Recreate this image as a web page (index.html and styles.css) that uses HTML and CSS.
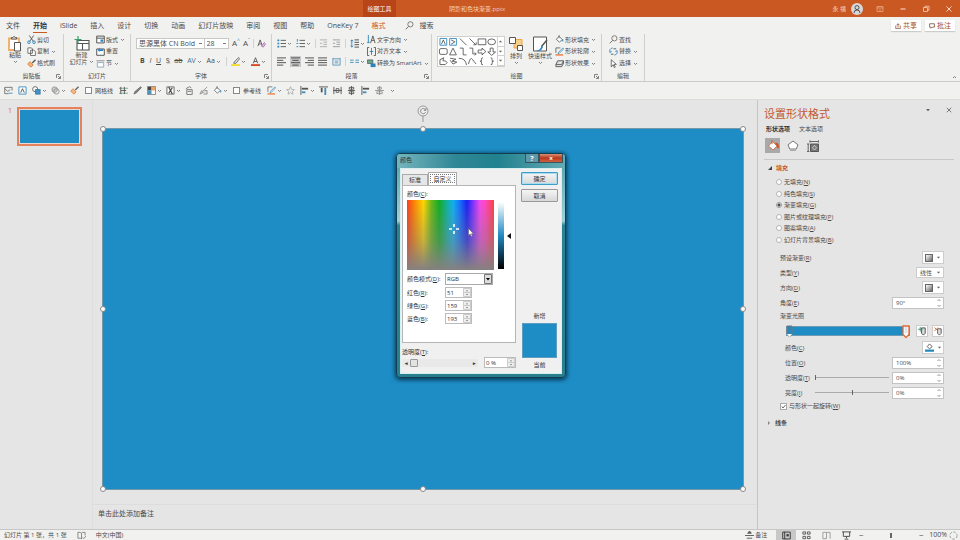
FILE: index.html
```html
<!DOCTYPE html>
<html lang="zh-CN">
<head>
<meta charset="utf-8">
<title>阴影和色块渐变.pptx</title>
<link rel="stylesheet" href="styles.css">
</head>
<body>
<svg class="sprite" aria-hidden="true">
  <symbol id="chev" viewBox="0 0 5 5"><path d="M1 2l1.500 1.500L4 2" fill="none" stroke="#666" stroke-width=".8"/></symbol>
  <symbol id="tri" viewBox="0 0 5 5"><path d="M.8 1.700h3.400L2.500 3.600z" fill="#666"/></symbol>
  <symbol id="launch" viewBox="0 0 5 5"><path d="M.5 4V.5H4M2 2l2.300 2.300M4.500 2v2.500H2" fill="none" stroke="#666" stroke-width=".8"/></symbol>
  <symbol id="bucket" viewBox="0 0 10 10"><path d="M4.500 1.500L8 5 5 8 1.500 4.800z" fill="#fff" stroke="#555" stroke-width=".9"/><path d="M4.500 0v3.500" stroke="#555" stroke-width=".8"/><path d="M8.300 4.500q1.400 2 .3 2.600-1.200-.4-.3-2.600" fill="#2a8bc4" stroke="#2a8bc4" stroke-width=".5"/></symbol>
  <symbol id="brush" viewBox="0 0 10 10"><path d="M9.500.8L5.800 4.500" stroke="#555" stroke-width="1.500"/><path d="M3.200 3l3.600 3.500L4.500 9 .8 5.800z" fill="#f4b27c" stroke="#d8742c" stroke-width=".9"/></symbol>
  <symbol id="outline" viewBox="0 0 10 10"><path d="M6 1H1v5.500" fill="none" stroke="#666"/><path d="M8.800 1L4 5.800l-.6 1.600 1.600-.5L9.600 2z" fill="#fff" stroke="#2a7db5" stroke-width=".8"/><path d="M.5 8.800h8.500" stroke="#ef7d3b" stroke-width="1.600"/></symbol>
  <symbol id="shapes" viewBox="0 0 10 10"><circle cx="3.500" cy="3.500" r="2.800" fill="#fff" stroke="#555"/><rect x="4" y="4" width="5" height="5" fill="#2d8ac6" stroke="#25709f"/></symbol>
  <symbol id="pen" viewBox="0 0 10 10"><path d="M8.500.8L9.400 1.700 4 7.500 1 9l1.300-3z" fill="#777" stroke="#444" stroke-width=".7"/></symbol>
  <symbol id="alignl" viewBox="0 0 10 10"><path d="M1 0v10" stroke="#444"/><path d="M2 3h7" stroke="#444" stroke-width="2"/><path d="M2 7h4" stroke="#2c83b5" stroke-width="2"/></symbol>
  <symbol id="search" viewBox="0 0 10 10"><circle cx="6" cy="3.700" r="2.900" fill="none" stroke="#666" stroke-width=".9"/><path d="M4 6L.8 9.300" stroke="#666"/></symbol>
</svg>

<div class="app">
<header class="titlebar">
  <span class="context-tab">绘图工具</span>
  <h1 class="doc-title">阴影和色块渐变.pptx</h1>
  <div class="window-tools">
    <span>永 福</span>
    <svg class="avatar" viewBox="0 0 12 12"><circle cx="6" cy="6" r="6" fill="#d7d7d7"/><circle cx="6" cy="4.600" r="2" fill="none" stroke="#444" stroke-width=".9"/><path d="M3 10q0-3 3-3t3 3" fill="none" stroke="#444" stroke-width=".9"/></svg>
    <svg class="win" viewBox="0 0 8 8"><path d="M1 1.500h6v5H1zM1 3h6M4 6V4" fill="none" stroke="#eda883" stroke-width=".8"/></svg>
    <svg class="win" viewBox="0 0 8 8"><path d="M1.500 4h5" stroke="#fbe2d6"/></svg>
    <svg class="win" viewBox="0 0 8 8"><path d="M1.500 2.500h4v4h-4zM3 2.500V1.200h4v4H5.500" fill="none" stroke="#fbcdb6" stroke-width=".8"/></svg>
    <svg class="win" viewBox="0 0 8 8"><path d="M1.500 1.500l5 5m0-5l-5 5" stroke="#fbe2d6" stroke-width=".9"/></svg>
  </div>
</header>

<nav class="tabs">
  <a href="#file">文件</a><a href="#home" class="current">开始</a><a href="#islide">iSlide</a><a href="#insert">插入</a><a href="#design">设计</a><a href="#trans">切换</a><a href="#anim">动画</a><a href="#show">幻灯片放映</a><a href="#review">审阅</a><a href="#view">视图</a><a href="#help">帮助</a><a href="#onekey">OneKey 7</a><a href="#format" class="format">格式</a>
  <button class="tell"><svg class="i8"><use href="#search"/></svg>搜索</button>
  <div class="share">
    <button><svg class="i6" viewBox="0 0 8 8"><path d="M1 3.500v4h6v-4M4 6V1M2 3l2-2 2 2" fill="none" stroke="#8d4a2e"/></svg>共享</button>
    <button><svg class="i6" viewBox="0 0 8 8"><path d="M.8 1h6.400v4.500H4L2.500 7V5.500H.8z" fill="none" stroke="#6d4a3e"/></svg>批注</button>
  </div>
</nav>

<section class="ribbon">
  <div class="group g-clip">
    <div class="body">
      <button class="big"><svg class="i16" viewBox="0 0 16 16"><path d="M2 2.500h10V14H2z" fill="#fff" stroke="#eeaa62" stroke-width="1.800"/><path d="M4.500 3V1.500h1.300q1.200-2 2.400 0h1.300V3z" fill="#fff" stroke="#555"/><path d="M7.500 6.500h6V15h-6z" fill="#fff" stroke="#555"/></svg><span>粘贴</span><svg class="chev"><use href="#chev"/></svg></button>
      <div class="stack">
        <button><svg class="i8" viewBox="0 0 10 10"><path d="M2.500.5L7 7M7.500.5L3 7" stroke="#444" stroke-width=".9"/><circle cx="2.200" cy="8" r="1.500" fill="none" stroke="#2a83c0"/><circle cx="7.800" cy="8" r="1.500" fill="none" stroke="#2a83c0"/></svg>剪切</button>
        <button><svg class="i8" viewBox="0 0 10 10"><path d="M1 1h4l1 1v5H1zM4 3.500h3.500L9.300 5v4.500H4z" fill="#fff" stroke="#555" stroke-width=".9"/></svg>复制<svg class="chev"><use href="#chev"/></svg></button>
        <button><svg class="i8"><use href="#brush"/></svg>格式刷</button>
      </div>
    </div>
    <div class="name">剪贴板<svg class="launch"><use href="#launch"/></svg></div>
  </div>

  <div class="group g-slides">
    <div class="body">
      <button class="big"><svg class="i16" viewBox="0 0 16 16"><path d="M3 4.500h12V14H3zM3 7.500h12M8.500 7.500V14" fill="#fff" stroke="#555" stroke-width="1.100"/><path d="M4 0v7M.5 3.500h7" stroke="#35a06a" stroke-width="1.200"/></svg><span>新建</span><span>幻灯片<svg class="chev"><use href="#chev"/></svg></span></button>
      <div class="stack">
        <button><svg class="i8" viewBox="0 0 10 10"><path d="M.8 1.200h8.400v7.600H.8zM1 3.500h8" fill="#fff" stroke="#444"/><path d="M5 5h3v2.500H5z" fill="#2a83c0"/></svg>版式<svg class="chev"><use href="#chev"/></svg></button>
        <button><svg class="i8" viewBox="0 0 10 10"><path d="M.8 2.200h8.400v7H.8z" fill="#fff" stroke="#444"/><path d="M2 3.500l2-3v2h4v2H4v1z" fill="#2a83c0"/></svg>重置</button>
        <button><svg class="i8" viewBox="0 0 10 10"><path d="M.5 2h9" stroke="#888"/><path d="M1.500 4h7v5h-7z" fill="#fff" stroke="#89a9bc"/></svg>节<svg class="chev"><use href="#chev"/></svg></button>
      </div>
    </div>
    <div class="name">幻灯片</div>
  </div>

  <div class="group g-font">
    <div class="body rows">
      <div class="row">
        <select class="family" aria-label="字体"><option>思源黑体 CN Bold</option></select><select class="size" aria-label="字号"><option>28</option></select>
        <button class="glyph">A<sup>^</sup></button><button class="glyph">A<sup>ˇ</sup></button><i class="sep"></i>
        <button><svg class="i8" viewBox="0 0 10 10"><path d="M1 8l2.500-7L6 8M2 5.500h3" fill="none" stroke="#555"/><path d="M5 8l3-4 1.500 1.500L7 9z" fill="#e6bfe8" stroke="#9a5c9e" stroke-width=".8"/></svg></button>
      </div>
      <div class="row style">
        <button><b>B</b></button><button><i>I</i></button><button><u>U</u></button><button class="shadow">S</button><button><s>ab</s></button>
        <button class="av">AV<svg class="chev"><use href="#chev"/></svg></button><button>Aa<svg class="chev"><use href="#chev"/></svg></button><i class="sep"></i>
        <button><svg class="i8" viewBox="0 0 10 10"><path d="M8.500.5L4 5 3 7h2.500L9.500 2z" fill="#ddd" stroke="#555" stroke-width=".8"/><path d="M0 9h10" stroke="#f6dc26" stroke-width="2"/></svg><svg class="chev"><use href="#chev"/></svg></button>
        <button><svg class="i8" viewBox="0 0 10 10"><path d="M2.500 7L5 .8 7.500 7M3.300 5h3.400" fill="none" stroke="#555"/><path d="M0 9h10" stroke="#d9431d" stroke-width="2"/></svg><svg class="chev"><use href="#chev"/></svg></button>
      </div>
    </div>
    <div class="name">字体<svg class="launch"><use href="#launch"/></svg></div>
  </div>

  <div class="group g-para">
    <div class="body">
      <div class="rows">
        <div class="row">
          <button><svg class="i8" viewBox="0 0 10 10"><path d="M4 1.500h6M4 5h6M4 8.500h6" stroke="#555"/><path d="M.5 1.500h2M.5 5h2M.5 8.500h2" stroke="#2a83c0" stroke-width="1.800"/></svg><svg class="chev"><use href="#chev"/></svg></button>
          <button><svg class="i8" viewBox="0 0 10 10"><path d="M4 1.500h6M4 5h6M4 8.500h6" stroke="#555"/><path d="M1.500 0v3M.5 5h2M.5 8.500h2" stroke="#2a83c0"/></svg><svg class="chev"><use href="#chev"/></svg></button><i class="sep"></i>
          <button><svg class="i8" viewBox="0 0 10 10"><path d="M1 1h8M5 3.500h4M5 6h4M1 8.500h8M3.500 4.800H1" stroke="#aaa"/></svg></button>
          <button><svg class="i8" viewBox="0 0 10 10"><path d="M1 1h8M5 3.500h4M5 6h4M1 8.500h8M3.500 4.800H1" stroke="#999"/></svg></button><i class="sep"></i>
          <button><svg class="i8" viewBox="0 0 10 10"><path d="M5 1h5M5 3.700h5M5 6.300h5M5 9h5" stroke="#444"/><path d="M2 1v8M.5 2.500L2 1l1.500 1.500M.5 7.500L2 9l1.500-1.500" fill="none" stroke="#2a83c0"/></svg><svg class="chev"><use href="#chev"/></svg></button>
        </div>
        <div class="row aligns">
          <button><svg class="i8" viewBox="0 0 10 10"><path d="M0 1h10M0 3.700h7M0 6.300h10M0 9h7" stroke="#444"/></svg></button>
          <button class="on"><svg class="i8" viewBox="0 0 10 10"><path d="M0 1h10M1.500 3.700h7M0 6.300h10M1.500 9h7" stroke="#444"/></svg></button>
          <button><svg class="i8" viewBox="0 0 10 10"><path d="M0 1h10M3 3.700h7M0 6.300h10M3 9h7" stroke="#444"/></svg></button>
          <button><svg class="i8" viewBox="0 0 10 10"><path d="M0 1h10M0 3.700h10M0 6.300h10M0 9h10" stroke="#444"/></svg></button>
          <button><svg class="i8" viewBox="0 0 10 10"><path d="M1 1v8M9 1v8M1 2h8M1 9h8M3 4.500h4M3 6.500h4" stroke="#5696b8"/></svg></button><i class="sep"></i>
          <button><svg class="i8" viewBox="0 0 10 10"><path d="M0 3.500h4M6 3.500h4M0 6h4M6 6h4" stroke="#3e8fc0"/></svg><svg class="chev"><use href="#chev"/></svg></button>
        </div>
      </div>
      <div class="stack">
        <button><svg class="i8" viewBox="0 0 10 10"><path d="M1.500 0v9M0 7.500L1.500 9 3 7.500" fill="none" stroke="#2a83c0"/><path d="M4 9l2.500-8L9 9M5 6h3" fill="none" stroke="#555"/></svg>文字方向<svg class="chev"><use href="#chev"/></svg></button>
        <button><svg class="i8" viewBox="0 0 10 10"><path d="M2.500.5H.5v9h2M7.500.5h2v9h-2" fill="none" stroke="#555"/><path d="M5 1v8M3 5h4" stroke="#2a83c0"/></svg>对齐文本<svg class="chev"><use href="#chev"/></svg></button>
        <button><svg class="i8" viewBox="0 0 10 10"><path d="M.5 1h6v4h-6z" fill="#62a98b" stroke="#555" stroke-width=".8"/><path d="M4 5h5.500v4H4z" fill="#2a83c0"/></svg>转换为 SmartArt<svg class="chev"><use href="#chev"/></svg></button>
      </div>
    </div>
    <div class="name">段落<svg class="launch"><use href="#launch"/></svg></div>
  </div>

  <div class="group g-draw">
    <div class="body">
      <div class="gallery">
        <svg class="shape-set" viewBox="0 0 60 30" fill="none" stroke="#555" stroke-width=".9">
          <g stroke="#2a83c0"><path d="M1.500 1.500h7v7h-7zM11.500 1.500h7v7h-7z"/></g><path d="M3 7.500L5 3l2 4.500M13 3l4 2-4 2.500"/><path d="M22 1.500l7 7M32 1.500l6.500 6.500m-2.500 0h3V5.500"/><path d="M41 2h8v6h-8z"/><ellipse cx="55" cy="5" rx="4" ry="3"/>
          <rect x="1" y="12" width="8" height="6" rx="1.500"/><path d="M15 11.500l3.500 7h-7zM22 11.500h3.500v7H29M32 11.500h3.500v6H39m-1.500-1.500L39 17.500 37.500 19M41 13.500h4v-2l4 3.500-4 3.500v-2h-4zM53.500 11.500h3v4H59l-4 3.500-4-3.500h2.500z"/>
          <path d="M1.500 23.500l4-2-1 3q4 0 4.500 2L7 28.500H1.500zM12 22l6 1-4 2 5 1-4 2-3-4M21 22q7 0 8 7M31 28q2-8 4-5t4 5M46 21.500q-2 0-1.500 2t-1.500 1.500q2 0 1.500 2t1.500 1.500M54 21.500q2 0 1.500 2t1.500 1.500q-2 0-1.500 2T54 28.500"/>
        </svg>
        <div class="scroll"><button aria-label="上"><svg class="chev flip"><use href="#tri"/></svg></button><button aria-label="下"><svg class="chev"><use href="#tri"/></svg></button><button aria-label="更多"><svg class="chev"><use href="#tri"/></svg></button></div>
      </div>
      <button class="big arrange"><svg class="i16" viewBox="0 0 16 16"><path d="M6 3.500h8V12H6z" fill="#f7cf88" stroke="#e9a94c"/><path d="M1.500 1.500h6v6h-6zM9.500 9.500h5v5h-5z" fill="#fff" stroke="#555"/></svg><span>排列</span><svg class="chev"><use href="#chev"/></svg></button>
      <button class="big quick"><svg class="i16" viewBox="0 0 16 16"><path d="M1.500 1h13v14h-13z" fill="#fff" stroke="#555"/><path d="M15 4l-5.500 6.500" stroke="#555" stroke-width="1.500"/><path d="M9.500 9.500q-1 5-5.500 5 5 2 7-3.500z" fill="#2a83c0"/></svg><span>快速样式</span><svg class="chev"><use href="#chev"/></svg></button>
      <div class="stack">
        <button><svg class="i8"><use href="#bucket"/></svg>形状填充<svg class="chev"><use href="#chev"/></svg></button>
        <button><svg class="i8"><use href="#outline"/></svg>形状轮廓<svg class="chev"><use href="#chev"/></svg></button>
        <button><svg class="i8" viewBox="0 0 10 10"><path d="M3 2h6.500L7.500 6H1zM1 6v2.500h6.500l2-4V2" fill="#ddd" stroke="#555"/></svg>形状效果<svg class="chev"><use href="#chev"/></svg></button>
      </div>
    </div>
    <div class="name">绘图<svg class="launch"><use href="#launch"/></svg></div>
  </div>

  <div class="group g-edit">
    <div class="body"><div class="stack">
      <button><svg class="i8"><use href="#search"/></svg>查找</button>
      <button><svg class="i8" viewBox="0 0 10 10"><path d="M4 1q-4 1-3 5l2-1M6 9q4-1 3-5L7 5" fill="none" stroke="#2a83c0"/><path d="M5 2h3M2 8h3" stroke="#555"/></svg>替换<svg class="chev"><use href="#chev"/></svg></button>
      <button><svg class="i8" viewBox="0 0 10 10"><path d="M2.500.8v8l2-2.300L6 9.500l1-.5-1.500-3h2.700z" fill="#fff" stroke="#555" stroke-width=".9"/></svg>选择<svg class="chev"><use href="#chev"/></svg></button>
    </div></div>
    <div class="name">编辑</div>
  </div>
  <button class="collapse" aria-label="折叠功能区"><svg class="chev flip"><use href="#chev"/></svg></button>
</section>

<div class="quickbar">
  <svg class="i8" viewBox="0 0 10 10"><path d="M9 5V1.500H.8v7H5M1 3l3 3 3-2" fill="none" stroke="#555" stroke-width=".9"/><path d="M5 8h4.500" stroke="#2a83c0"/></svg>
  <svg class="i8" viewBox="0 0 10 10"><path d="M1 1h8v8H1z" fill="#fff" stroke="#2a83c0"/><path d="M3 7.500L5 3l2 4.500" fill="none" stroke="#444"/></svg>
  <span class="drop"><svg class="i8"><use href="#shapes"/></svg><svg class="chev"><use href="#chev"/></svg></span>
  <span class="drop"><svg class="i8" viewBox="0 0 10 10"><circle cx="4" cy="4" r="3" fill="#ccc" stroke="#888"/><circle cx="6" cy="6" r="3" fill="none" stroke="#888"/></svg><svg class="chev"><use href="#chev"/></svg></span>
  <svg class="i8"><use href="#brush"/></svg>
  <label><input type="checkbox">网格线</label>
  <svg class="i8" viewBox="0 0 10 10"><path d="M0 2.500h10M0 8h10" stroke="#5da183"/><path d="M2 1v8M6 1v8M2 5h6" stroke="#444"/></svg>
  <svg class="i8"><use href="#pen"/></svg>
  <span class="drop"><svg class="i8" viewBox="0 0 10 10"><path d="M.5.500h9v9h-9z" fill="#fff" stroke="#777"/><path d="M1 1h4v4H1z" fill="#333"/><path d="M5 1h4v4H5z" fill="#ee9b50"/><path d="M1 5h4v4H1z" fill="#3689be"/></svg><svg class="chev"><use href="#chev"/></svg></span>
  <span class="drop"><svg class="i8" viewBox="0 0 10 10"><path d="M1 1h8v8H1z" fill="#fff" stroke="#555"/><path d="M3 1l4 8M7 2L3 8" stroke="#333" stroke-width="1.300"/></svg><svg class="chev"><use href="#chev"/></svg></span>
  <svg class="i8" viewBox="0 0 10 10"><path d="M2 9.500V4h6v5.500zM1 3L5 .8 7 2M3 6h4" fill="none" stroke="#666"/></svg>
  <svg class="i8" viewBox="0 0 10 10"><path d="M9 1L3 7M1 9l2-4 2 2zM6 5h3v4H5" fill="#ddd" stroke="#888"/></svg>
  <span class="drop"><svg class="i8"><use href="#bucket"/></svg><svg class="chev"><use href="#chev"/></svg></span>
  <label><input type="checkbox">参考线</label>
  <span class="drop"><svg class="i8"><use href="#outline"/></svg><svg class="chev"><use href="#chev"/></svg></span>
  <svg class="i8" viewBox="0 0 10 10"><path d="M5 .8l1.200 3 3.200.2L7 6l.8 3.200L5 7.500 2.200 9.200 3 6 .6 4l3.200-.2z" fill="#eee" stroke="#999" stroke-width=".8"/></svg>
  <span class="drop"><svg class="i8"><use href="#alignl"/></svg><svg class="chev"><use href="#chev"/></svg></span>
  <svg class="i8" viewBox="0 0 10 10"><path d="M0 1h10" stroke="#444"/><path d="M3 2v5" stroke="#444" stroke-width="2"/><path d="M7 2v8" stroke="#2c83b5" stroke-width="2"/></svg>
  <svg class="i8" viewBox="0 0 10 10"><path d="M1 1v8M9 1v8M0 5h10M3.500 3h3v4h-3z" fill="#fff" stroke="#444"/></svg>
  <svg class="i8" viewBox="0 0 10 10"><path d="M1 5h8M5 0v10M2.500 1.500h5v2h-5zM2.500 6.500h5v2h-5z" fill="#fff" stroke="#444"/></svg>
  <svg class="i8"><use href="#alignl"/></svg>
  <svg class="i8" viewBox="0 0 10 10"><path d="M0 5h10M5 0v10M3 1.500h4v2H3zM2 6.500h6v2H2z" fill="#fff" stroke="#888"/></svg>
  <svg class="chev"><use href="#chev"/></svg>
</div>

<main class="work">
  <aside class="thumbs"><span class="num">1</span><div class="thumb"></div></aside>

  <div class="editor">
    <div class="stage">
      <div class="slide">
        <svg class="rotate" viewBox="0 0 12 17"><path d="M6 11v6" stroke="#999"/><circle cx="6" cy="6" r="5" fill="#eee" stroke="#999"/><path d="M8.500 5A2.600 2.600 0 1 0 8.500 7.200M9 3v2.300H6.800" fill="none" stroke="#888"/></svg>
        <i class="h nw"></i><i class="h n"></i><i class="h ne"></i><i class="h w"></i><i class="h e"></i><i class="h sw"></i><i class="h s"></i><i class="h se"></i>

        <form class="dialog">
          <div class="dlg-title"><span>颜色</span><span class="dlg-buttons"><button type="button" class="q">?</button><button type="button" class="x">×</button></span></div>
          <div class="dlg-body">
            <div class="dlg-main">
              <div class="dlg-tabs"><button type="button">标准</button><button type="button" class="active">自定义</button></div>
              <div class="sheet">
                <span class="cap">颜色(<u>C</u>):</span>
                <div class="pickers">
                  <div class="spectrum">
                    <svg class="cross" viewBox="0 0 10 10"><path d="M5 0v3M5 7v3M0 5h3M7 5h3" stroke="#fff" stroke-width="1.600"/></svg>
                    <svg class="cursor" viewBox="0 0 6 9"><path d="M.5.500v7l1.600-1.400L3.400 8.500l1-.5-1-2.300h2.100z" fill="#fff" stroke="#555" stroke-width=".5"/></svg>
                  </div>
                  <div class="lum"></div>
                  <svg class="pointer" viewBox="0 0 4 6"><path d="M4 0v6L0 3z" fill="#111"/></svg>
                </div>
                <div class="fields">
                  <label for="mode">颜色模式(<u>D</u>):</label><select id="mode"><option>RGB</option></select>
                  <label for="r">红色(<u>R</u>):</label><span class="spin"><input id="r" value="51"><i></i></span>
                  <label for="g">绿色(<u>G</u>):</label><span class="spin"><input id="g" value="159"><i></i></span>
                  <label for="b">蓝色(<u>B</u>):</label><span class="spin"><input id="b" value="193"><i></i></span>
                </div>
              </div>
              <label class="cap" for="dt">透明度(<u>T</u>):</label>
              <div class="opacity"><span class="track"><b>◂</b><input id="dt" type="range" value="0"><b>▸</b></span><span class="spin"><input aria-label="透明度" value="0 %"><i></i></span></div>
            </div>
            <div class="dlg-side">
              <button type="button" class="ok">确定</button><button type="button">取消</button>
              <div class="preview"><span>新增</span><div class="swatch"></div><span>当前</span></div>
            </div>
          </div>
        </form>
      </div>
    </div>
    <div class="notes">单击此处添加备注</div>
  </div>

  <aside class="pane">
    <div class="pane-head"><h2>设置形状格式</h2><button aria-label="选项"><svg class="i6"><use href="#tri"/></svg></button><button aria-label="关闭"><svg class="i6" viewBox="0 0 8 8"><path d="M1 1l6 6m0-6L1 7" stroke="#555"/></svg></button></div>
    <div class="pane-tabs"><b>形状选项</b><span>文本选项</span></div>
    <div class="pane-icons">
      <button class="on" aria-label="填充与线条"><svg class="i12" viewBox="0 0 12 12"><path d="M5.500 1.500l4.500 4.500-4 4L1.500 6z" fill="#fff" stroke="#c8633a" stroke-width=".8"/><path d="M5 0v4" stroke="#c8633a"/><path d="M8.500 3.500q3 0 2.500 4.500" fill="none" stroke="#d0521e" stroke-width="1.800"/></svg></button>
      <button aria-label="效果"><svg class="i12" viewBox="0 0 12 12"><path d="M6 1l5 3.800L9.300 9H2.700L1 4.800z" fill="#fff" stroke="#777"/><path d="M3 10.500h6" stroke="#aaa"/></svg></button>
      <button aria-label="大小与属性"><svg class="i12" viewBox="0 0 12 12"><path d="M3 1.500h9M3 .3v2.400M11.500.3v2.400M1.200 4v7.500M0 4h2.400M0 11.500h2.400" stroke="#666"/><path d="M3.500 4h8v7.500h-8z" fill="#777" stroke="#555"/><path d="M7.500 5.500l2 2.200-2 2.300-2-2.300z" fill="none" stroke="#ddd" stroke-width=".8"/></svg></button>
    </div>
    <h3 class="section open">填充</h3>
    <div class="radios">
      <label><input type="radio" name="fill"><span>无填充(<u>N</u>)</span></label>
      <label><input type="radio" name="fill"><span>纯色填充(<u>S</u>)</span></label>
      <label><input type="radio" name="fill" checked><span>渐变填充(<u>G</u>)</span></label>
      <label><input type="radio" name="fill"><span>图片或纹理填充(<u>P</u>)</span></label>
      <label><input type="radio" name="fill"><span>图案填充(<u>A</u>)</span></label>
      <label><input type="radio" name="fill"><span>幻灯片背景填充(<u>B</u>)</span></label>
    </div>
    <div class="props">
      <div class="prop"><span>预设渐变(<u>R</u>)</span><button class="pick" aria-label="预设渐变"><i class="grad"></i><svg class="chev"><use href="#tri"/></svg></button></div>
      <div class="prop"><label for="type">类型(<u>Y</u>)</label><select id="type"><option>线性</option></select></div>
      <div class="prop"><span>方向(<u>D</u>)</span><button class="pick" aria-label="方向"><i class="grad"></i><svg class="chev"><use href="#tri"/></svg></button></div>
      <div class="prop"><label for="angle">角度(<u>E</u>)</label><span class="num-box"><input id="angle" value="90°"><i></i></span></div>
      <div class="prop short"><span>渐变光圈</span></div>
      <div class="stops">
        <div class="ramp"><svg class="stop first" viewBox="0 0 8 14"><path d="M1 1h5v8L3.500 12 1 9z" fill="#2b85b6" stroke="#777"/><path d="M1 9h5L3.500 12z" fill="#fff"/></svg><svg class="stop last" viewBox="0 0 8 14"><path d="M1 1h6v8.500L4 12.500 1 9.500z" fill="#fff" stroke="#df6a36" stroke-width="1.300"/><path d="M2.500 2h3v6h-3z" fill="#d9e6ee"/></svg></div>
        <button aria-label="添加"><svg class="i8" viewBox="0 0 10 10"><path d="M4 1h4v6L6 9 4 7z" fill="#ddd" stroke="#444"/><path d="M2.500 0v5M0 2.500h5" stroke="#419170"/></svg></button>
        <button aria-label="删除"><svg class="i8" viewBox="0 0 10 10"><path d="M4 2h4v5L6 9 4 7z" fill="#ddd" stroke="#555"/><path d="M.5.500l4 4m0-4l-4 4" stroke="#df6a36"/></svg></button>
      </div>
      <div class="prop in"><span>颜色(<u>C</u>)</span><button class="pick" aria-label="颜色"><svg class="i8" viewBox="0 0 10 10"><path d="M5 1l3 3-3 2.500L2.500 4z" fill="#fff" stroke="#555"/><path d="M0 8.500h10" stroke="#268abd" stroke-width="2.500"/></svg><svg class="chev"><use href="#tri"/></svg></button></div>
      <div class="prop in"><label for="pos">位置(<u>O</u>)</label><span class="num-box"><input id="pos" value="100%"><i></i></span></div>
      <div class="prop in"><label for="tr">透明度(<u>T</u>)</label><input type="range" id="tr" value="0"><span class="num-box"><input aria-label="透明度" value="0%"><i></i></span></div>
      <div class="prop in"><label for="br">亮度(<u>I</u>)</label><input type="range" id="br" value="50"><span class="num-box"><input aria-label="亮度" value="0%"><i></i></span></div>
      <label class="check"><input type="checkbox" checked><span>与形状一起旋转(<u>W</u>)</span></label>
    </div>
    <h3 class="section closed">线条</h3>
  </aside>
</main>

<footer class="status">
  <span>幻灯片 第 1 张，共 1 张</span>
  <svg class="i8" viewBox="0 0 10 10"><path d="M1 1.500h3L5 3v6L4 8H1zM5 3l1-1.500h3V5M6 7l1.500 1.500L10 5.500" fill="none" stroke="#777" stroke-width=".9"/></svg>
  <span>中文(中国)</span>
  <div class="status-right">
    <button><svg class="i8" viewBox="0 0 10 10"><path d="M0 5h10M2 8h6M5 0l2 2.500H3z" fill="#666" stroke="#555"/></svg>备注</button>
    <button class="view on" aria-label="普通视图"><svg class="i8" viewBox="0 0 10 10"><path d="M.8 1.200h8.400v7.600H.8zM3 1v8" fill="none" stroke="#333"/><path d="M5 3.500h2.500V6H5z" fill="#333"/></svg></button>
    <button class="view" aria-label="幻灯片浏览"><svg class="i8" viewBox="0 0 10 10"><path d="M1 1h3v2.500H1zM6 1h3v2.500H6zM1 6h3v2.500H1zM6 6h3v2.500H6z" fill="none" stroke="#555"/></svg></button>
    <button class="view" aria-label="阅读视图"><svg class="i8" viewBox="0 0 10 10"><path d="M1 1.500h4v7H1zM5 1.500h4v7" fill="none" stroke="#999"/></svg></button>
    <button class="view" aria-label="放映"><svg class="i8" viewBox="0 0 10 10"><path d="M0 1h10M1.500 1v5h7V1M5 6v2M3 9h4" fill="none" stroke="#444"/></svg></button>
    <span class="sign">−</span><input type="range" aria-label="缩放" value="50"><span class="sign">−</span>
    <span class="zoom">100%</span>
    <svg class="i8" viewBox="0 0 10 10"><circle cx="5" cy="5" r="4" fill="none" stroke="#999" stroke-dasharray="3 1.500"/></svg>
  </div>
</footer>
</div>
</body>
</html>
```

FILE: styles.css
```css
* { box-sizing: border-box; }
body { margin: 0; font: 6px/8px "Open Sans", "Noto Sans CJK SC", sans-serif; color: #4a4a4a; background: #e5e5e5; }
button, input, select { font: inherit; color: inherit; margin: 0; padding: 0; border: 0; background: none; border-radius: 0; }
button { display: inline-flex; align-items: center; white-space: nowrap; }
select { appearance: none; }
input { min-width: 0; }
svg { display: block; flex: none; }
a { color: inherit; text-decoration: none; }
h1, h2, h3 { margin: 0; font-weight: 400; font-size: inherit; }
.sprite { display: none; }
.app { display: flex; flex-direction: column; height: 100vh; }
.i6 { width: 6px; height: 6px; }
.i8 { width: 9px; height: 9px; }
.i12 { width: 12px; height: 12px; }
.i16 { width: 16px; height: 16px; }
.chev { width: 5px; height: 5px; display: inline-block; margin-left: 1px; }
.flip { transform: rotate(180deg); }

.titlebar { display: flex; align-items: center; height: 17px; background: #c95823; color: #f6cdb8; }
.context-tab { width: 33px; margin-left: 363px; align-self: stretch; display: grid; place-items: center; background: #b8441a; color: #fff; }
.doc-title { margin-left: 53px; }
.window-tools { margin-left: auto; display: flex; align-items: center; gap: 15px; padding-right: 7px; }
.window-tools span { margin-right: -10px; }
.avatar { width: 12px; height: 12px; margin-right: -2px; }
.win { width: 8px; height: 8px; }

.tabs { display: flex; align-items: center; gap: 13px; height: 17px; padding: 0 5px 0 6px; background: #f1f1ef; font-size: 7px; white-space: nowrap; }
.tabs a { line-height: 13px; border-bottom: 1px solid transparent; }
.tabs .current { color: #333; border-color: #c95823; font-weight: 600; }
.tabs .format { color: #d05a28; }
.tell { margin-left: 6px; gap: 6px; }
.share { margin-left: auto; display: flex; gap: 4px; }
.share button { height: 11px; padding: 0 4px; gap: 2px; background: #fff; color: #a84a22; box-shadow: 0 1px 1px #ccc; }

.ribbon { display: flex; height: 48px; background: #f1f1ef; border-bottom: 1px solid #cbcbcb; }
.group { display: flex; flex-direction: column; flex: none; padding: 0 5px; border-right: 1px solid #cfcfcf; }
.group .body { flex: 1; display: flex; }
.group .name { position: relative; height: 9px; text-align: center; }
.launch { position: absolute; right: -3px; top: 2px; width: 5px; height: 5px; }
.g-clip { width: 64px; }
.g-slides { width: 67px; }
.g-font { width: 141px; }
.g-para { width: 160px; }
.g-draw { width: 170px; }
.g-edit { width: 43px; }
.big { flex-direction: column; line-height: 7px; width: 20px; flex: none; justify-content: flex-start; padding-top: 2px; }
.g-slides .big { width: 25px; }
.stack { display: flex; flex-direction: column; justify-content: space-around; align-items: flex-start; margin-left: 2px; padding-bottom: 2px; height: 37px; }
.stack button { height: 10px; gap: 1px; }
.group .rows { display: flex; flex-direction: column; flex: 1; }
.row { display: flex; align-items: center; height: 18px; }
.sep { width: 1px; height: 9px; background: #d2d2d2; margin: 0 3px; }
.family, .size { height: 11px; background: #fff linear-gradient(#777, #777) no-repeat right 2px center / 3px 1px; border: 1px solid #c8c8c8; padding: 0 0 0 2px; font-size: 7px; line-height: 9px; }
.family { width: 70px; }
.size { width: 25px; border-left: 0; }
.glyph { font-size: 8px; margin-left: 3px; }
.glyph sup { font-size: 5px; color: #2a83c0; line-height: 3px; align-self: flex-start; }
.style { font-size: 7px; justify-content: space-between; padding: 0 0 0 4px; }
.style .sep { margin: 0; }
.style .shadow { text-shadow: 1px 1px 1px #aaa; }
.style .av { color: #3b7699; }
.group.g-para .rows { flex: none; width: 88px; }
.g-para .row { justify-content: space-between; }
.g-para .sep { margin: 0; }
.aligns .on { background: #c8c8c8; padding: 1px; }
.gallery { display: flex; width: 68px; height: 31px; margin-top: 2px; background: #fff; border: 1px solid #d0d0d0; }
.shape-set { flex: 1; width: 60px; height: 29px; }
.scroll { display: flex; flex-direction: column; width: 7px; border-left: 1px solid #d0d0d0; }
.scroll button { flex: 1; border-bottom: 1px solid #d0d0d0; }
.scroll .chev { margin: 0; }
.arrange { margin-left: 1px; }
.quick { width: 28px; }
.arrange span, .quick span { margin-top: 1px; }
.g-draw .stack { margin-left: 1px; }
.collapse { margin-left: auto; align-self: flex-end; padding: 0 3px 1px 0; }

.quickbar { display: flex; align-items: center; gap: 5px; height: 18px; padding: 0 4px; background: #f1f1ef; border-bottom: 1px solid #dcdcdc; }
.drop { display: flex; align-items: center; margin-right: -1px; }
.quickbar label { display: flex; align-items: center; gap: 3px; margin: 0 1px; }
.quickbar .i8 { opacity: .9; }
input[type=checkbox] { appearance: none; width: 7px; height: 7px; border: 1px solid #888; background: #fff; }

.work { flex: 1; display: flex; min-height: 0; }
.thumbs { width: 93px; flex: none; display: flex; gap: 5px; padding: 7px 0 0 8px; border-right: 1px solid #dedede; }
.num { color: #d5683c; font-size: 7px; }
.thumb { width: 65px; height: 39px; border: 2px solid #e5825c; background: #1e8dc6; box-shadow: inset 0 0 0 1px #e8d9d3; }
.editor { flex: 1; display: flex; flex-direction: column; min-width: 0; }
.stage { flex: 1; display: flex; padding: 28px 13px 14px 9px; }
.slide { position: relative; flex: 1; background: #1e8dc6; border: 1px solid #7598a9; }
.notes { height: 25px; padding: 4px 5px; font-size: 7px; line-height: 10px; border-top: 1px solid #dcdcdc; }
.h { position: absolute; width: 6px; height: 6px; margin: -3px; border: 1px solid #888; border-radius: 50%; background: #fff; }
.nw, .n, .ne { top: 0; }
.w, .e { top: 50%; }
.sw, .s, .se { top: 100%; }
.nw, .w, .sw { left: 0; }
.n, .s { left: 50%; }
.ne, .e, .se { left: 100%; }
.rotate { position: absolute; width: 12px; height: 17px; left: 50%; top: -24px; margin-left: -6px; }

.dialog { position: absolute; left: 293px; top: 24px; width: 170px; height: 225px; display: flex; flex-direction: column; padding: 0 3px 3px; color: #333; background: linear-gradient(#4b9fae, #9fd0d6 30%, #2b8291 32%, #2a7f8e); border: 1px solid #123f50; border-radius: 4px; box-shadow: 0 1px 4px 1px rgba(0, 30, 50, .75); }
.dlg-title { display: flex; justify-content: space-between; height: 14px; line-height: 13px; background: linear-gradient(90deg, #75b5bd, #2f8795 35%, #21818e 60%, #65abb5); margin: 0 -3px; padding: 0 2px 0 3px; border-radius: 3px 3px 0 0; }
.dlg-buttons { display: flex; height: 9px; }
.dlg-buttons button { justify-content: center; color: #fff; font-weight: 700; font-size: 7px; border: 1px solid #34545e; border-top: 0; }
.dlg-buttons .q { width: 14px; background: #5f98a9; }
.dlg-buttons .x { width: 24px; background: linear-gradient(#d98e78, #b8391d 50%, #cf6042); }
.dlg-body { flex: 1; display: flex; gap: 5px; padding: 3px 3px 4px 1px; background: #f0f0f0; border: 1px solid #d7eef0; }
.dlg-main { width: 114px; flex: none; display: flex; flex-direction: column; }
.dlg-tabs { display: flex; align-items: flex-end; height: 13px; }
.dlg-tabs button { height: 11px; width: 26px; justify-content: center; border: 1px solid #aaa; border-bottom: 0; background: #e6e6e6; }
.dlg-tabs .active { height: 13px; width: 29px; background: #fff; outline: 1px dotted #777; outline-offset: -3px; }
.sheet { height: 158px; padding: 4px; background: #fff; border: 1px solid #b5b5b5; }
.cap { display: block; line-height: 8px; }
.pickers { display: flex; margin-top: 2px; gap: 4px; }
.spectrum { position: relative; width: 88px; height: 70px; background: linear-gradient(rgba(128, 128, 128, 0), rgba(128, 128, 128, .45) 60%, #858080), linear-gradient(90deg, #ff3b18, #ff8a00 9%, #ffd800 19%, #6ab81a 28%, #10ae22 37%, #0fb2a0 46%, #11b0f0 53%, #1377ff 60%, #1a20f5 69%, #8d35ff 77%, #f548e8 84%, #ff47c0 90%, #ff4040); }
.cross { position: absolute; left: 42px; top: 24px; width: 10px; height: 10px; }
.cursor { position: absolute; left: 61px; top: 28px; width: 6px; height: 9px; }
.lum { width: 6px; height: 67px; margin-top: 2px; background: linear-gradient(#fff, #218ac4 50%, #000); }
.pointer { width: 4px; height: 6px; margin: 33px 0 0 -1px; }
.fields { display: grid; grid-template-columns: 38px 1fr; row-gap: 2px; align-items: center; margin-top: 3px; }
.fields select { width: 48px; height: 12px; padding-left: 1px; border: 1px solid #aaa; background: url("data:image/svg+xml,%3Csvg xmlns='http://www.w3.org/2000/svg' viewBox='0 0 8 10'%3E%3Cpath d='M.5.5h7v9h-7z' fill='%23ddd' stroke='%23777'/%3E%3Cpath d='M2 4h4L4 6.500z'/%3E%3C/svg%3E") no-repeat right / 8px 10px #fff; }
.spin { display: flex; width: 27px; height: 11px; border: 1px solid #bbb; background: #fff; }
.spin input { flex: 1; padding-left: 1px; }
.spin i { width: 8px; background: url("data:image/svg+xml,%3Csvg xmlns='http://www.w3.org/2000/svg' viewBox='0 0 8 9'%3E%3Cpath d='M.5.5h7v8h-7zM.5 4.500h7' fill='%23eee' stroke='%23ccc'/%3E%3Cpath d='M3 3.200h2L4 2zM3 6h2L4 7.200z' fill='%23567'/%3E%3C/svg%3E") no-repeat center / 8px 9px; }
.dlg-main > .cap { margin-top: 5px; }
.opacity { display: flex; align-items: center; justify-content: space-between; margin-top: 1px; }
.opacity .spin { width: 32px; }
.track { display: flex; width: 76px; background: #e9e9e9; font-size: 5px; line-height: 8px; }
.track b { width: 8px; text-align: center; }
input[type=range] { appearance: none; height: 8px; background: linear-gradient(#aaa, #aaa) no-repeat center / 100% 1px; }
input[type=range]::-webkit-slider-thumb { appearance: none; width: 1px; height: 5px; background: #666; }
.track input[type=range] { flex: 1; background: none; }
.track input[type=range]::-webkit-slider-thumb { width: 8px; height: 8px; background: #e2e2e2; border: 1px solid #999; border-radius: 1px; }
.dlg-side { flex: 1; display: flex; flex-direction: column; gap: 4px; }
.dlg-side button { height: 13px; justify-content: center; border: 1px solid #999; border-radius: 1px; background: linear-gradient(#f5f5f5, #d8d8d8); }
.dlg-side .ok { border-color: #3c9fca; box-shadow: inset 0 0 0 1px #a9dcf0; }
.preview { margin-top: auto; display: flex; flex-direction: column; align-items: center; gap: 3px; }
.swatch { width: 35px; height: 35px; background: #1e8dc6; border: 1px solid #5d9ec0; }

.pane { width: 203px; flex: none; padding: 7px 6px 0; border-left: 1px solid #c6c6c6; }
.pane-head { display: flex; align-items: flex-start; gap: 15px; height: 18px; padding-right: 2px; }
.pane-head h2 { flex: 1; font-size: 11px; line-height: 13px; color: #c25a30; }
.pane-tabs { display: flex; gap: 9px; padding-left: 2px; }
.pane-tabs b { color: #333; }
.pane-icons { display: flex; gap: 5px; margin-top: 5px; height: 22px; padding-left: 1px; border-bottom: 1px solid #c8c8c8; }
.pane-icons button { width: 15px; height: 15px; justify-content: center; }
.pane-icons .on { background: #a9a9a9; }
.section { display: flex; align-items: center; gap: 4px; padding-left: 4px; margin-top: 3px; height: 9px; font-weight: 700; }
.section::before { content: ""; border: 2px solid transparent; border-left-color: #888; margin-right: -1px; }
.open { color: #c95823; }
.open::before { border-color: transparent #444 #444 transparent; margin-right: 0; }
.radios { padding: 4px 0 3px 12px; }
.radios label { display: flex; align-items: center; gap: 2px; height: 11px; margin-bottom: 1px; }
.radios label:nth-child(even) { margin-bottom: 0; }
input[type=radio] { appearance: none; width: 6px; height: 6px; border: 1px solid #b5b5b5; border-radius: 50%; background: #fff; }
input[type=radio]:checked { background: radial-gradient(#444 1px, #fff 2px); border-color: #999; }
.props { padding: 2px 10px 0 16px; }
.prop { display: flex; align-items: center; justify-content: space-between; height: 15px; }
.prop.short { height: 12px; }
.prop.in { padding-left: 5px; }
.pick { width: 22px; height: 13px; background: #fff; border: 1px solid #ccc; justify-content: center; gap: 2px; }
.grad { width: 8px; height: 8px; border: 1px solid #666; background: linear-gradient(135deg, #fff, #666); }
.prop select { width: 28px; height: 11px; padding-left: 3px; background: url("data:image/svg+xml,%3Csvg xmlns='http://www.w3.org/2000/svg' viewBox='0 0 5 5'%3E%3Cpath d='M.8 1.700h3.400L2.500 3.600z' fill='%23666'/%3E%3C/svg%3E") no-repeat right 2px center / 5px 5px #fff; border: 1px solid #ccc; }
.num-box { display: flex; width: 52px; height: 12px; background: #fff; border: 1px solid #c3c3c3; }
.num-box input { flex: 1; padding-left: 3px; }
.num-box i { width: 8px; background: url("data:image/svg+xml,%3Csvg xmlns='http://www.w3.org/2000/svg' viewBox='0 0 8 10'%3E%3Cpath d='M2.500 3L4 1.500 5.500 3M2.500 7L4 8.500 5.500 7' fill='none' stroke='%23777' stroke-width='.8'/%3E%3C/svg%3E") no-repeat center / 8px 10px; }
.prop input[type=range] { width: 74px; margin: 0 3px 0 auto; }
.stops { display: flex; align-items: center; gap: 4px; height: 18px; padding-left: 6px; }
.ramp { position: relative; flex: 1; height: 10px; margin-right: 2px; background: #1e8dc6; border: 1px solid #6d9bb3; }
.stop { position: absolute; top: -2px; width: 8px; height: 14px; }
.first { left: -1px; }
.last { right: -1px; }
.stops button { width: 12px; height: 12px; background: #fff; border: 1px solid #ccc; justify-content: center; }
.check { display: flex; align-items: center; gap: 2px; height: 12px; }
.check input:checked { background: url("data:image/svg+xml,%3Csvg xmlns='http://www.w3.org/2000/svg' viewBox='0 0 5 5'%3E%3Cpath d='M.8 2.500L2 4l2.500-3' fill='none' stroke='%23444' stroke-width='.8'/%3E%3C/svg%3E") #fff; border-color: #aaa; }
.closed { margin-top: 6px; }

.status { display: flex; align-items: center; gap: 10px; height: 11px; padding: 0 2px 0 4px; background: #f1f1ef; border-top: 1px solid #c6c6c6; }
.status-right { margin-left: auto; display: flex; align-items: center; }
.status-right button { gap: 1px; }
.view { width: 20px; height: 10px; justify-content: center; }
.status-right .view.on { margin-left: 9px; background: #c8c8c8; }
.sign { width: 10px; text-align: center; font-size: 8px; }
.status-right input { width: 50px; background: none; }
.status-right input::-webkit-slider-thumb { width: 2px; }
.zoom { font-size: 7px; margin: 0 2px 0 3px; }
```
